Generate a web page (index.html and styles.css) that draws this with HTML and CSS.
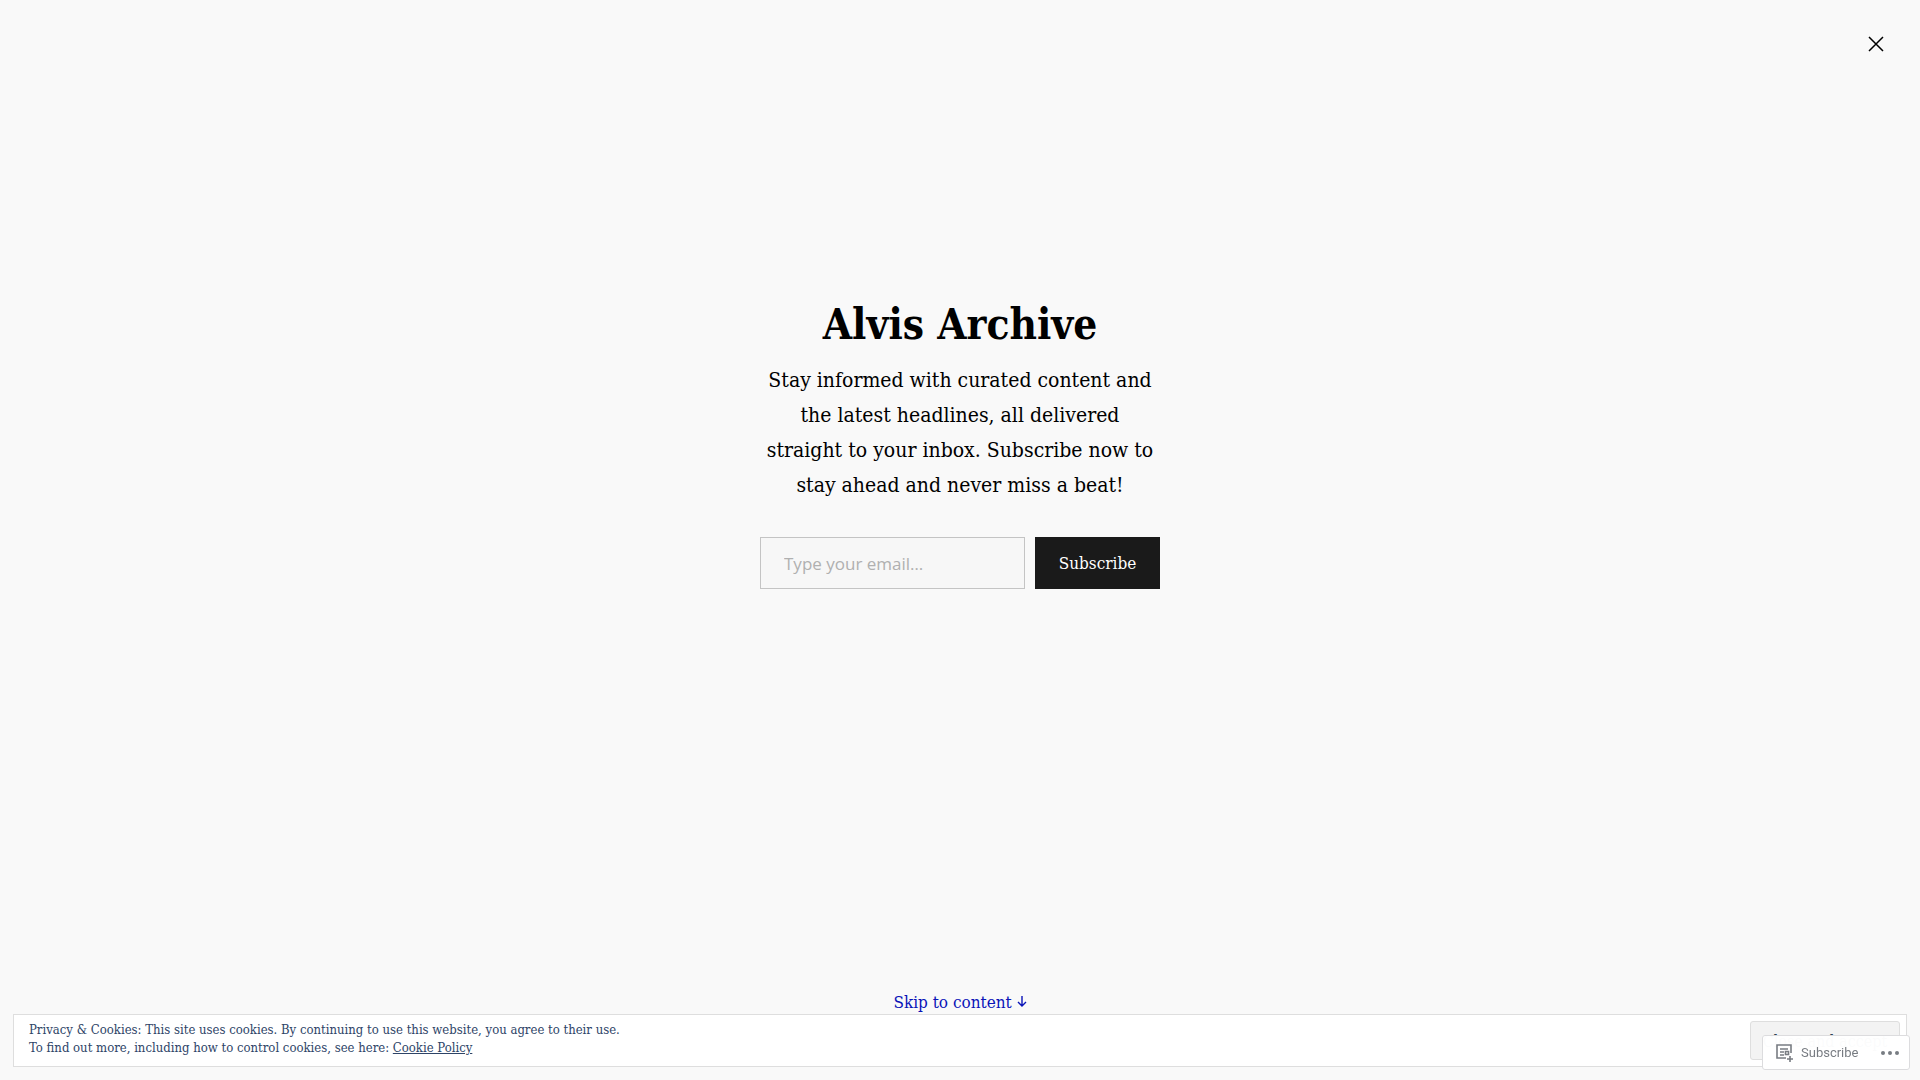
FILE: index.html
```html
<!DOCTYPE html>
<html lang="en">
<head>
    <meta charset="UTF-8">
    <meta name="viewport" content="width=device-width, initial-scale=1.0">
    <title>Alvis Archive</title>
    <link rel="stylesheet" href="styles.css">
</head>
<body>
    <main class="overlay">
        <header class="overlay-top">
            <button type="button" class="close-button" aria-label="Close">
                <svg width="24" height="24" viewBox="0 0 24 24" fill="none" stroke="#000" stroke-width="1.5">
                    <path d="M5 5l14 14M19 5L5 19"/>
                </svg>
            </button>
        </header>

        <section class="signup">
            <h1>Alvis Archive</h1>
            <p>Stay informed with curated content and the latest headlines, all delivered straight to your inbox. Subscribe now to stay ahead and never miss a beat!</p>
            <form class="signup-form">
                <input type="email" name="email" placeholder="Type your email…" aria-label="Type your email" required>
                <button type="submit">Subscribe</button>
            </form>
        </section>

        <a class="skip-link" href="#content">Skip to content
            <svg width="10" height="12" viewBox="0 0 10 12" fill="none" stroke="currentColor" stroke-width="1.4">
                <path d="M5 0v10M1 6l4 4 4-4"/>
            </svg>
        </a>
    </main>

    <div class="cookie-banner">
        <p>Privacy &amp; Cookies: This site uses cookies. By continuing to use this website, you agree to their use.<br>
        To find out more, including how to control cookies, see here: <a href="#cookies">Cookie Policy</a></p>
        <button type="button">Close and accept</button>
    </div>

    <div class="actionbar">
        <a class="actionbar-subscribe" href="#subscribe">
            <svg width="19" height="18" viewBox="0 0 19 18" fill="none" stroke="currentColor" stroke-width="1.6">
                <path d="M15 9V1H1v13h9M4 5h8M4 8h4M4 11h4M9.500 7.500h3v3h-3zM11 15h6M14 12v6"/>
            </svg>
            Subscribe
        </a>
        <button type="button" class="actionbar-more" aria-label="More">
            <svg width="20" height="6" viewBox="0 0 20 6" fill="currentColor">
                <circle cx="3" cy="3" r="2"/>
                <circle cx="10" cy="3" r="2"/>
                <circle cx="17" cy="3" r="2"/>
            </svg>
        </button>
    </div>
</body>
</html>
```

FILE: styles.css
```css
* {
    box-sizing: border-box;
}

body {
    margin: 0;
    background-color: #f9f9f9;
    color: #000;
    font-family: "DejaVu Serif Condensed", "DejaVu Serif", serif;
    font-size: 17px;
}

button {
    font-family: inherit;
    font-size: 17px;
    cursor: pointer;
}

.overlay {
    display: flex;
    flex-direction: column;
    align-items: center;
    min-height: 100vh;
    padding-bottom: 64px;
}

.overlay-top {
    display: flex;
    justify-content: flex-end;
    align-self: stretch;
    padding: 32px;
}

.close-button {
    display: flex;
    padding: 0;
    border: none;
    background: none;
}

/* signup block */
.signup {
    width: 400px;
    max-width: 100%;
    margin-top: 211px;
    text-align: center;
}

.signup h1 {
    margin: 0 0 12px;
    font-size: 42px;
    line-height: 52px;
}

.signup p {
    margin: 0 0 34px;
    font-size: 21px;
    line-height: 35px;
}

.signup-form {
    display: flex;
    gap: 10px;
}

.signup-form input {
    flex: 1;
    min-width: 0;
    height: 52px;
    padding: 0 23px;
    border: 1px solid #c4c4c4;
    border-radius: 0;
    background-color: #f7f7f7;
    font-family: "Open Sans", sans-serif;
    font-size: 17px;
}

.signup-form input::placeholder {
    color: #b0b0b0;
}

.signup-form button {
    width: 125px;
    padding: 0;
    border: none;
    background-color: #1a1a1a;
    color: #fff;
}

.skip-link {
    margin-top: auto;
    color: #0a14b8;
    line-height: 28px;
    text-decoration: none;
}

/* cookie notice */
.cookie-banner {
    position: fixed;
    right: 13px;
    bottom: 13px;
    left: 13px;
    display: flex;
    align-items: flex-start;
    justify-content: space-between;
    padding: 6px;
    padding-left: 15px;
    border: 1px solid #dedede;
    background-color: #fff;
    color: #2e4467;
    font-size: 13px;
}

.cookie-banner p {
    margin: 0;
    line-height: 18px;
}

.cookie-banner a {
    color: inherit;
}

.cookie-banner button {
    width: 150px;
    height: 39px;
    padding: 2px 0 0;
    border: 1px solid #dedede;
    border-radius: 3px;
    background-color: #f3f3f3;
    color: #2e4453;
    font-size: 16px;
}

/* floating bar in the corner */
.actionbar {
    position: fixed;
    right: 10px;
    bottom: 10px;
    display: flex;
    align-items: center;
    justify-content: space-between;
    width: 148px;
    height: 35px;
    padding: 0 9px 0 13px;
    border: 1px solid #dcdcde;
    border-radius: 3px;
    background-color: rgba(255, 255, 255, 0.98);
    color: #787c82;
    font-family: Roboto, sans-serif;
    font-size: 13px;
}

.actionbar-subscribe {
    display: flex;
    align-items: center;
    gap: 6px;
    color: inherit;
    text-decoration: none;
}

.actionbar-more {
    display: flex;
    padding: 0;
    border: none;
    background: none;
    color: inherit;
}
```
